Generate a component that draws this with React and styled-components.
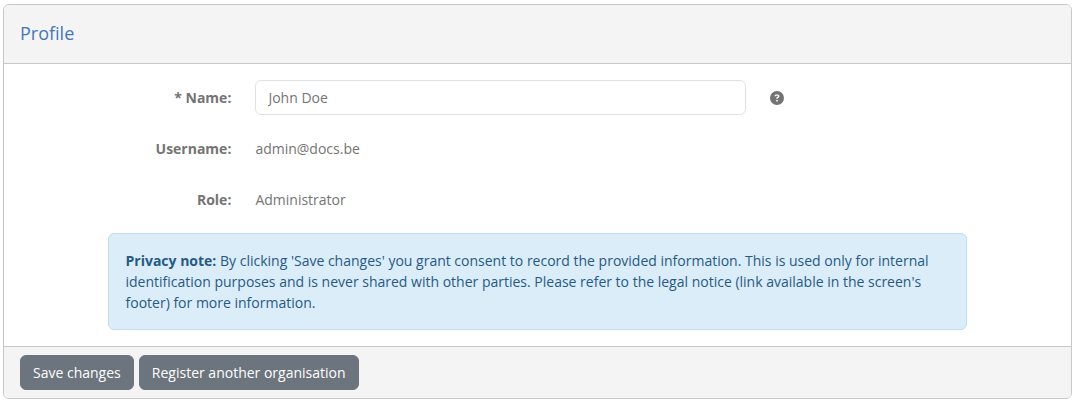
import React from "react";
import styled, { createGlobalStyle } from "styled-components";
import { FaCircleQuestion } from "react-icons/fa6";

export default function App() {
  return (
    <>
      <GlobalStyle />
      <Card>
        <CardHeader>
          <Title>Profile</Title>
        </CardHeader>
        <CardBody>
          <Row>
            <Label htmlFor="name">* Name:</Label>
            <Input id="name" type="text" defaultValue="John Doe" />
            <HelpIcon />
          </Row>
          <Row>
            <Label as="span">Username:</Label>
            <Value>admin@docs.be</Value>
          </Row>
          <Row>
            <Label as="span">Role:</Label>
            <Value>Administrator</Value>
          </Row>
          <Note>
            <strong>Privacy note:</strong> By clicking 'Save changes' you grant
            consent to record the provided information. This is used only for
            internal identification purposes and is never shared with other
            parties. Please refer to the legal notice (link available in the
            screen's footer) for more information.
          </Note>
        </CardBody>
        <CardFooter>
          <Button type="button">Save changes</Button>
          <Button type="button">Register another organisation</Button>
        </CardFooter>
      </Card>
    </>
  );
}

const GlobalStyle = createGlobalStyle`
  * {
    box-sizing: border-box;
  }
  body {
    margin: 0;
    background: #fff;
    color: #747474;
    font-family: "Open Sans", sans-serif;
    font-size: 14px;
    line-height: 21px;
  }
`;
const Card = styled.section`
  margin: 4px 2px 0 3px;
  height: 395px;
  display: flex;
  flex-direction: column;
  border: 1px solid #c8c8c8;
  border-radius: 6px;
  overflow: hidden;
`;
const CardHeader = styled.header`
  height: 59px;
  padding: 0 16px 2px;
  display: flex;
  align-items: center;
  background: #f4f4f4;
  border-bottom: 1px solid #c8c8c8;
`;
const Title = styled.h4`
  margin: 0;
  color: #4477b8;
  font-size: 18px;
  font-weight: 400;
  line-height: 22px;
`;
const CardBody = styled.div`
  flex: 1;
  padding: 16px 104px 0;
`;
const Row = styled.div`
  display: flex;
  align-items: center;
  height: 35px;
  margin-bottom: 16px;
`;
const Label = styled.label`
  width: 123.4px;
  margin-right: 24px;
  text-align: right;
  font-weight: 700;
`;
const Input = styled.input`
  width: 491px;
  height: 35px;
  padding: 6px 12px;
  border: 1px solid #dee2e6;
  border-radius: 6px;
  background: #fff;
  color: #747474;
  font: inherit;
`;
const HelpIcon = styled(FaCircleQuestion)`
  width: 14px;
  height: 14px;
  margin-left: 23.6px;
`;
const Value = styled.span``;
const Note = styled.div`
  width: 859px;
  height: 97px;
  padding: 16px 16px 16px 16.5px;
  border: 1px solid #bfdfef;
  border-radius: 6px;
  background: #dbedf8;
  color: #265a85;
`;
const CardFooter = styled.footer`
  height: 52px;
  padding: 8px 16px;
  display: flex;
  gap: 4.6px;
  background: #f4f4f4;
  border-top: 1px solid #c8c8c8;
`;
const Button = styled.button`
  height: 35px;
  padding: 6px 12.5px 6px 12px;
  border: 1px solid #6c757d;
  border-radius: 6px;
  background: #6c757d;
  color: #fff;
  font: inherit;
  cursor: pointer;
`;
